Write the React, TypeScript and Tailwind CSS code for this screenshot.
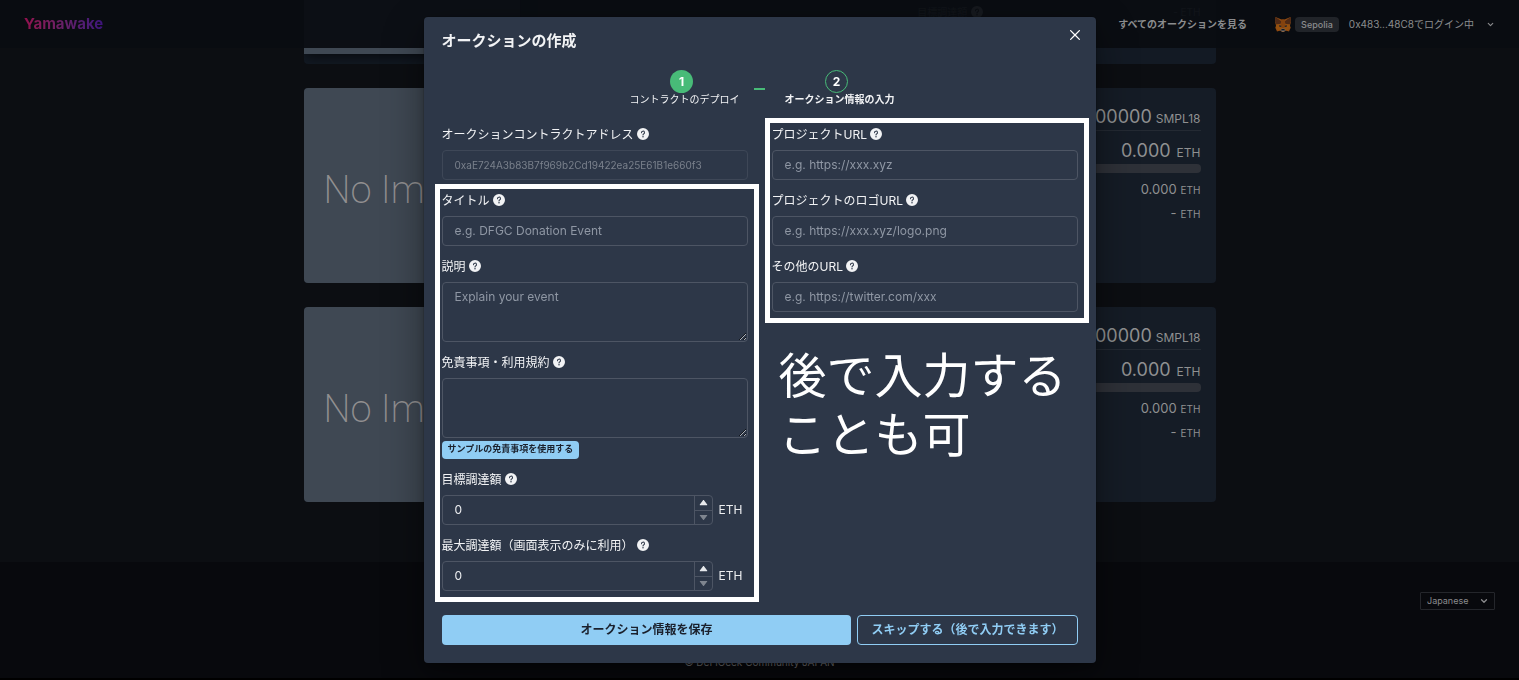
import React from "react";
import { ChevronDown } from "lucide-react";

function QuestionIcon() {
  return (
    <svg viewBox="0 0 24 24" className="-mt-[2px] size-3 shrink-0 fill-[#f2f3f5]" aria-hidden="true">
      <path d="M12,0A12,12,0,1,0,24,12,12.013,12.013,0,0,0,12,0Zm0,19a1.5,1.5,0,1,1,1.5-1.5A1.5,1.5,0,0,1,12,19Zm1.6-6.08a1,1,0,0,0-.6.917,1,1,0,1,1-2,0,3,3,0,0,1,1.8-2.75A2,2,0,1,0,10,9.255a1,1,0,1,1-2,0,4,4,0,1,1,5.6,3.66Z" />
    </svg>
  );
}

function CloseIcon() {
  return (
    <svg viewBox="0 0 24 24" className="size-[10px] fill-white" aria-hidden="true">
      <path d="M.439,21.44a1.5,1.5,0,0,0,2.122,2.121L11.823,14.3a.25.25,0,0,1,.354,0l9.262,9.263a1.5,1.5,0,1,0,2.122-2.121L14.3,12.177a.25.25,0,0,1,0-.354l9.263-9.262A1.5,1.5,0,0,0,21.439.44L12.177,9.7a.25.25,0,0,1-.354,0L2.561.44A1.5,1.5,0,0,0,.439,2.561L9.7,11.823a.25.25,0,0,1,0,.354Z" />
    </svg>
  );
}

function Triangle({ down = false }: { down?: boolean }) {
  return (
    <svg
      viewBox="0 0 24 24"
      className={down ? "size-[9px] rotate-180 fill-[#7f858f]" : "size-[9px] fill-[#e6e8eb]"}
      aria-hidden="true"
    >
      <path d="M12.8,5.4c-0.377-0.504-1.223-0.504-1.6,0l-9,12c-0.228,0.303-0.264,0.708-0.095,1.047C2.275,18.786,2.621,19,3,19h18c0.379,0,0.725-0.214,0.895-0.553c0.169-0.339,0.133-0.744-0.095-1.047L12.8,5.4z" />
    </svg>
  );
}

function FoxIcon() {
  return (
    <svg viewBox="0 0 32 30" className="h-[15px] w-4" aria-hidden="true">
      <path d="M1 0 13 5h6L31 0l1 9-2 8 1 5-3 7-7-2-3 3h-4l-3-3-7 2-3-7 1-5-2-8z" fill="#8f4a12" />
      <path d="M1 0 13 9l-2 5-8 1L0 9zM31 0 19 9l2 5 8 1 3-6z" fill="#4f2a16" />
      <path d="M13 5h6l2 10-3 9h-4l-3-9z" fill="#84430f" />
      <path d="m3 15 8-1 3 10-6 3-7-5zM29 15l-8-1-3 10 6 3 7-5z" fill="#94500f" />
      <path d="m9 16 4 2-1 2-4-1zM23 16l-4 2 1 2 4-1z" fill="#20222a" />
      <path d="m12 24 4-1 4 1 1 3-3 2h-4l-3-2z" fill="#7d7f82" />
      <path d="M13 24h6l1 3h-8z" fill="#14161b" />
    </svg>
  );
}

function Header() {
  return (
    <header className="sticky top-0 z-10 flex h-12 items-center justify-between bg-[#0a0d12]/95 px-6">
      <a
        href="#top"
        className="bg-linear-to-r from-[#930f4e] to-[#3d147c] bg-clip-text text-[15px] font-bold text-transparent"
      >
        Yamawake
      </a>
      <nav className="flex items-center text-[#8b8c8e]">
        <a href="#auctions" className="mr-7 text-[10px] font-bold">
          すべてのオークションを見る
        </a>
        <FoxIcon />
        <span className="mr-[10px] ml-1 rounded bg-[#212429] px-[6px] text-[9px] leading-[15px] font-medium">
          Sepolia
        </span>
        <button type="button" className="flex items-center gap-3 text-[10px]">
          0x483...48C8でログイン中
          <ChevronDown className="size-[9px]" strokeWidth={3} />
        </button>
      </nav>
    </header>
  );
}

function AuctionCard() {
  return (
    <article className="flex h-[195px] overflow-hidden rounded bg-[#151c26] text-[#8f9091]">
      <div className="flex w-[216px] items-center bg-[#3f4853] pl-5 font-['Roboto',sans-serif] text-[38px] font-extralight whitespace-nowrap text-[#918f90]">
        <span className="pt-[10px]">No Image</span>
      </div>
      <div className="flex flex-1 flex-col px-[15px] pt-4">
        <p className="flex items-baseline justify-end gap-1 border-b border-[#242a33] text-[18px] leading-[26px]">
          100.00000 <span className="text-[12px] leading-none">SMPL18</span>
        </p>
        <p className="mt-[7px] flex items-baseline justify-end gap-[6px] text-[18px] leading-[26px]">
          0.000 <span className="text-[12px] leading-none">ETH</span>
        </p>
        <div className="h-[9px] shrink-0 rounded bg-[#2e3138]" />
        <p className="mt-[7px] flex items-baseline justify-end gap-1 text-[13px] leading-[18px]">
          0.000 <span className="text-[10px] leading-none">ETH</span>
        </p>
        <p className="mt-[6px] flex items-baseline justify-end gap-1 text-[13px] leading-[18px]">
          - <span className="text-[10px] leading-none">ETH</span>
        </p>
      </div>
    </article>
  );
}

function FeaturedCard() {
  return (
    <article className="flex h-[195px] justify-between overflow-hidden rounded bg-[#131a24] text-[#8f9091]">
      <div className="mb-[10px] w-[216px] bg-[#3f4853] shadow-[0_4px_12px_rgba(0,0,0,0.6)]" />
      <div className="flex items-end gap-[190px] px-[15px] pb-11 text-[10px]">
        <p className="flex items-center gap-1">
          目標調達額 <QuestionIcon />
        </p>
        <p>- ETH</p>
      </div>
    </article>
  );
}

function PageFooter() {
  return (
    <footer className="flex flex-1 flex-col justify-between border-b-2 border-black bg-[#08090d] px-6 pt-[30px] pb-2 text-[#77787b]">
      <div className="relative flex self-end">
        <select
          aria-label="Language"
          className="h-[18px] w-[75px] appearance-none rounded-[1px] border border-[#24262b] bg-transparent pl-[6px] text-[9px] text-[#8b8c8e]"
        >
          <option>Japanese</option>
          <option>English</option>
        </select>
        <ChevronDown className="pointer-events-none absolute top-1 right-[6px] size-[10px] text-[#8b8c8e]" strokeWidth={3} />
      </div>
      <p className="text-center text-[10px] leading-4">© DeFiGeek Community JAPAN</p>
    </footer>
  );
}

const inputClass =
  "h-[30px] w-full rounded border border-[#4d5564] bg-transparent px-3 pb-[2px] text-[12px] text-[#eceef0] placeholder:text-[#8f97a4] outline-none";
const textareaClass =
  "block h-[60px] w-full resize rounded border border-[#4d5564] bg-transparent px-3 py-[5px] text-[12px] leading-[18px] text-[#eceef0] placeholder:text-[#8f97a4] outline-none";

function Field({ id, label, children }: { id: string; label: string; children: React.ReactNode }) {
  return (
    <div className="flex flex-col gap-[6px]">
      <label htmlFor={id} className="flex items-center gap-[3px] text-[12px] leading-[18px] text-[#f2f3f5]">
        {label}
        <QuestionIcon />
      </label>
      {children}
    </div>
  );
}

function EthInput({ id }: { id: string }) {
  return (
    <div className="flex items-center gap-[6px] pr-[5px]">
      <div className="flex h-[30px] flex-1 overflow-hidden rounded border border-[#4d5564]">
        <input id={id} type="text" inputMode="decimal" defaultValue="0" className="min-w-0 flex-1 bg-transparent px-3 text-[12px] text-[#eceef0] outline-none" />
        <div className="flex w-[18px] flex-col border-l border-[#4d5564]">
          <button type="button" aria-label="増やす" className="flex flex-1 items-center justify-center">
            <Triangle />
          </button>
          <button type="button" aria-label="減らす" className="flex flex-1 items-center justify-center border-t border-[#4d5564]">
            <Triangle down />
          </button>
        </div>
      </div>
      <span className="text-[12px] text-[#eceef0]">ETH</span>
    </div>
  );
}

function Highlight() {
  return (
    <div className="pointer-events-none absolute -top-2 -right-[11px] -bottom-[11px] -left-[7px] border-[5px] border-white" />
  );
}

function Steps() {
  return (
    <ol className="flex justify-center pl-[5px] text-[10px] leading-[13px] text-[#f2f3f5]">
      <li className="flex min-w-[116px] flex-col items-center">
        <span className="mr-[6px] flex size-[23px] items-center justify-center rounded-full bg-[#48bb78] text-[12px] font-bold text-white">
          1
        </span>
        <span>コントラクトのデプロイ</span>
      </li>
      <li aria-hidden="true" className="mt-[18px] mr-[17px] ml-[11px] h-[2px] w-[11px] bg-[#48bb78]" />
      <li className="flex min-w-[116px] flex-col items-center" aria-current="step">
        <span className="mr-[6px] flex size-[23px] items-center justify-center rounded-full border border-[#48bb78] text-[12px] font-bold text-white">
          2
        </span>
        <span className="font-bold">オークション情報の入力</span>
      </li>
    </ol>
  );
}

function AuctionDialog() {
  return (
    <div className="fixed inset-0 z-20 flex items-start justify-center overflow-y-auto py-[17px]">
      <section
        role="dialog"
        aria-modal="true"
        aria-labelledby="dialog-title"
        className="w-full max-w-2xl rounded bg-[#2d3748] px-[18px] pt-3 pb-[18px] shadow-[0_0_0_1px_rgba(0,0,0,0.1),0_5px_10px_rgba(0,0,0,0.2),0_15px_40px_rgba(0,0,0,0.4)]"
      >
        <div className="flex items-start justify-between">
          <h2 id="dialog-title" className="text-[15px] leading-[23px] font-bold text-[#f2f3f5]">
            オークションの作成
          </h2>
          <button type="button" aria-label="閉じる" className="-mt-1 -mr-[7px] flex size-5 items-center justify-center">
            <CloseIcon />
          </button>
        </div>
        <div className="pt-[18px]">
          <Steps />
        </div>
        <form className="mt-5" onSubmit={(e) => e.preventDefault()}>
          <div className="grid grid-cols-2 gap-6">
            <div className="flex flex-col gap-3">
              <Field id="address" label="オークションコントラクトアドレス">
                <input
                  id="address"
                  disabled
                  defaultValue="0xaE724A3b83B7f969b2Cd19422ea25E61B1e660f3"
                  className="h-[30px] w-full rounded border border-[#3e4757] bg-transparent px-3 text-[10px] text-[#7a818c]"
                />
              </Field>
              <div className="relative flex flex-col gap-3">
                <Highlight />
                <Field id="title" label="タイトル">
                  <input id="title" placeholder="e.g. DFGC Donation Event" className={inputClass} />
                </Field>
                <Field id="description" label="説明">
                  <textarea id="description" placeholder="Explain your event" className={textareaClass} />
                </Field>
                <div className="flex flex-col items-start gap-[3px]">
                  <div className="w-full">
                    <Field id="terms" label="免責事項・利用規約">
                      <textarea id="terms" className={textareaClass} />
                    </Field>
                  </div>
                  <button type="button" className="h-[18px] rounded bg-[#90cdf4] px-[6px] pb-[2px] text-[9px] leading-4 font-bold text-[#1a202c]">
                    サンプルの免責事項を使用する
                  </button>
                </div>
                <Field id="target" label="目標調達額">
                  <EthInput id="target" />
                </Field>
                <Field id="maximum" label="最大調達額（画面表示のみに利用）">
                  <EthInput id="maximum" />
                </Field>
              </div>
            </div>
            <div>
              <div className="relative flex flex-col gap-3">
                <Highlight />
                <Field id="project-url" label="プロジェクトURL">
                  <input id="project-url" placeholder="e.g. https://xxx.xyz" className={inputClass} />
                </Field>
                <Field id="logo-url" label="プロジェクトのロゴURL">
                  <input id="logo-url" placeholder="e.g. https://xxx.xyz/logo.png" className={inputClass} />
                </Field>
                <Field id="other-url" label="その他のURL">
                  <input id="other-url" placeholder="e.g. https://twitter.com/xxx" className={inputClass} />
                </Field>
              </div>
              <p className="mt-[34px] pl-[7px] text-[48px] leading-[59px] text-white">
                後で入力する
                <br />
                ことも可
              </p>
            </div>
          </div>
          <div className="mt-6 flex gap-[6px]">
            <button type="submit" className="h-[30px] flex-1 rounded bg-[#90cdf4] text-[12px] font-bold text-[#1a202c]">
              オークション情報を保存
            </button>
            <button type="button" className="h-[30px] rounded border border-[#90cdf4] px-[13px] text-[12px] font-bold text-[#90cdf4]">
              スキップする（後で入力できます）
            </button>
          </div>
        </form>
      </section>
    </div>
  );
}

export default function App() {
  return (
    <div
      lang="ja"
      className="flex min-h-screen flex-col overflow-hidden bg-[#0c0e12] font-['Inter','Noto_Sans_CJK_JP',sans-serif]"
    >
      <Header />
      <main className="mx-auto -mt-[179px] flex w-full max-w-[912px] flex-col gap-6 pb-[60px]">
        <FeaturedCard />
        <AuctionCard />
        <AuctionCard />
      </main>
      <PageFooter />
      <AuctionDialog />
    </div>
  );
}
